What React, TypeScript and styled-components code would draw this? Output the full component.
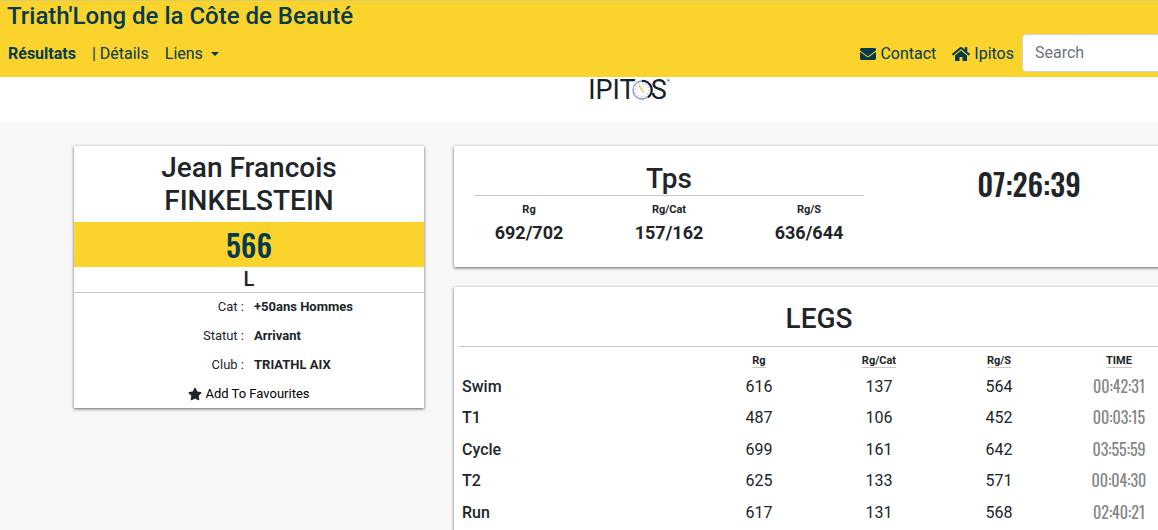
import React from "react";
import styled, { createGlobalStyle } from "styled-components";
import { FaEnvelope, FaHome, FaStar } from "react-icons/fa";

const GlobalStyle = createGlobalStyle`
  *, *::before, *::after { box-sizing: border-box; }
  body {
    margin: 0;
    overflow-x: hidden;
    background: #f7f7f7;
    color: #212529;
    font: 400 16px/24px Roboto, "Liberation Sans", sans-serif;
  }
  h1, h2, p, dl, dd { margin: 0; }
`;

const yellow = "#fad42c";
const navy = "#073b4c";
const rule = "#c8c8c8";
const narrow = `Oswald, "Roboto Condensed", "Liberation Sans Narrow", sans-serif`;

const Page = styled.div`
  min-width: 1258px;
`;

const Header = styled.header`
  background: ${yellow};
  border-top: 1px solid #dccb6a;
  padding: 0 0 5px;
`;

const Brand = styled.a`
  display: block;
  width: max-content;
  padding-left: 7px;
  color: ${navy};
  font-size: 24px;
  font-weight: 500;
  line-height: 30px;
  text-decoration: none;
`;

const Nav = styled.nav`
  display: flex;
  align-items: center;
  padding-top: 3px;
`;

const NavLink = styled.a<{ $strong?: boolean }>`
  display: flex;
  align-items: center;
  gap: 4px;
  padding: 2px 8px 0;
  color: ${navy};
  font-weight: ${(p) => (p.$strong ? 700 : 400)};
  text-decoration: none;
`;

const NavMenu = styled.button`
  display: flex;
  align-items: center;
  gap: 8px;
  padding: 2px 8px 0;
  border: 0;
  background: none;
  color: ${navy};
  font: inherit;

  &::after {
    content: "";
    border: 4px solid transparent;
    border-top-color: currentColor;
    border-bottom: 0;
  }
`;

const NavEnd = styled.div`
  display: flex;
  align-items: center;
  margin-left: auto;
`;

const Search = styled.input`
  width: 236px;
  height: 38px;
  padding: 5px 12px 7px;
  border: 1px solid #ced4da;
  border-radius: 4px;
  background: #fff;
  font: inherit;

  &::placeholder {
    color: #6c757d;
    opacity: 1;
  }
`;

const LogoBand = styled.div`
  display: flex;
  justify-content: center;
  height: 45px;
  background: #fff;
`;

const Logo = styled.a`
  display: flex;
  height: 26px;
  color: #14202e;
  font-size: 27px;
  font-weight: 400;
  line-height: 26px;
  text-decoration: none;

  svg {
    width: 22px;
    height: 22px;
    margin: 2px -2px 0 -5px;
  }
  small {
    font-size: 4px;
    line-height: 8px;
  }
`;

const Container = styled.main`
  display: grid;
  grid-template-columns: 4fr 8fr;
  align-items: start;
  max-width: 1140px;
  margin: 0 auto;
  padding-top: 24px;
`;

const Column = styled.div`
  display: grid;
  gap: 20px;
  padding: 0 15px 20px;
`;

const Card = styled.section`
  background: #fff;
  box-shadow: 0 1px 3px rgba(0, 0, 0, 0.6);
`;

const Name = styled.h1`
  padding: 5px 60px;
  font-size: 28px;
  font-weight: 500;
  line-height: 33px;
  text-align: center;
`;

const Bib = styled.p`
  background: ${yellow};
  color: ${navy};
  font: 500 30px/45px ${narrow};
  text-align: center;
`;

const Race = styled.p`
  border-bottom: 1px solid ${rule};
  font-size: 20px;
  font-weight: 500;
  line-height: 25px;
  text-align: center;
`;

const Facts = styled.dl`
  display: grid;
  grid-template-columns: 1fr 1fr;
  gap: 1px 10px;
  font-size: 13px;
  line-height: 28px;

  dt { text-align: right; }
  dd { font-weight: 700; }
`;

const Favourite = styled.button`
  display: flex;
  align-items: center;
  justify-content: center;
  gap: 3px;
  width: 100%;
  padding: 1px 0 0;
  border: 0;
  background: none;
  color: #000;
  font: 400 13px/28px Roboto, sans-serif;

  svg { color: #212529; }
`;

const Summary = styled(Card)`
  display: grid;
  grid-template-columns: 7fr 5fr;
  padding: 15px 5px 20px;
`;

const Title = styled.h2`
  padding-top: 2px;
  font-size: 28px;
  font-weight: 500;
  line-height: 32px;
  text-align: center;
`;

const SummaryTitle = styled(Title)`
  margin: 0 15px;
  border-bottom: 1px solid ${rule};
`;

const Ranks = styled.dl`
  display: grid;
  grid-template-columns: repeat(3, 1fr);
  padding-top: 5px;
  text-align: center;

  dt {
    font-size: 11px;
    font-weight: 700;
    line-height: 17px;
  }
  dd {
    font-size: 18px;
    font-weight: 700;
    line-height: 29px;
  }
`;

const TotalTime = styled.p`
  font: 500 30px/45px ${narrow};
  text-align: center;
`;

const Legs = styled(Card)`
  padding: 14px 5px 20px;
`;

const LegsTable = styled.table`
  width: 100%;
  margin-top: 11px;
  border-top: 1px solid ${rule};
  border-collapse: collapse;
  table-layout: fixed;
  text-align: center;

  th, td { padding: 0; }
  thead th {
    height: 24px;
    padding-top: 4px;
    font-size: 11px;
    line-height: 13px;
  }
  thead th:first-child { width: 33.33%; }
  thead span {
    display: inline-block;
    border-bottom: 1px solid ${rule};
  }
  tbody th {
    padding-left: 3px;
    font-weight: 500;
    text-align: left;
  }
  tbody tr { height: 32px; }
  tbody tr:nth-child(even) { height: 31px; }
  tbody td:last-child {
    padding-bottom: 2px;
    color: #868686;
    font-family: ${narrow};
  }
`;

const Clock = () => (
  <svg viewBox="0 0 22 22" fill="none" aria-hidden="true">
    <circle cx="11" cy="11" r="9" fill="#fff" stroke="#8496b5" strokeWidth="1.3" />
    <path d="M11 1.8a9.2 9.2 0 0 1 6 16.6" stroke="#14202e" strokeWidth="2.2" />
    <circle cx="11" cy="11" r="6.8" stroke="#8797b8" strokeWidth="1.2" strokeDasharray=".8 2.76" />
    <path d="M8 6.5 11 11l2 2.5" stroke="#eac766" strokeWidth="1.4" />
  </svg>
);

const ranks = [
  ["Rg", "692/702"],
  ["Rg/Cat", "157/162"],
  ["Rg/S", "636/644"],
];

const facts = [
  ["Cat :", "+50ans Hommes"],
  ["Statut :", "Arrivant"],
  ["Club :", "TRIATHL AIX"],
];

const legs = [
  ["Swim", "616", "137", "564", "00:42:31"],
  ["T1", "487", "106", "452", "00:03:15"],
  ["Cycle", "699", "161", "642", "03:55:59"],
  ["T2", "625", "133", "571", "00:04:30"],
  ["Run", "617", "131", "568", "02:40:21"],
];

export default function App() {
  return (
    <Page>
      <GlobalStyle />
      <Header>
        <Brand href="#">Triath'Long de la Côte de Beauté</Brand>
        <Nav>
          <NavLink href="#" $strong>Résultats</NavLink>
          <NavLink href="#">| Détails</NavLink>
          <NavMenu type="button">Liens</NavMenu>
          <NavEnd>
            <NavLink href="#"><FaEnvelope />Contact</NavLink>
            <NavLink href="#"><FaHome size={18} />Ipitos</NavLink>
            <Search type="search" placeholder="Search" aria-label="Search" />
          </NavEnd>
        </Nav>
      </Header>
      <LogoBand>
        <Logo href="#" aria-label="Ipitos">IPIT<Clock />S<small>®</small></Logo>
      </LogoBand>
      <Container>
        <Column>
          <Card>
            <Name>Jean Francois FINKELSTEIN</Name>
            <Bib>566</Bib>
            <Race>L</Race>
            <Facts>
              {facts.map(([label, value]) => (
                <React.Fragment key={label}>
                  <dt>{label}</dt>
                  <dd>{value}</dd>
                </React.Fragment>
              ))}
            </Facts>
            <Favourite type="button"><FaStar size={14} />Add To Favourites</Favourite>
          </Card>
        </Column>
        <Column>
          <Summary>
            <div>
              <SummaryTitle>Tps</SummaryTitle>
              <Ranks>
                {ranks.map(([label, value]) => (
                  <div key={label}>
                    <dt>{label}</dt>
                    <dd>{value}</dd>
                  </div>
                ))}
              </Ranks>
            </div>
            <TotalTime>07:26:39</TotalTime>
          </Summary>
          <Legs>
            <Title>LEGS</Title>
            <LegsTable>
              <thead>
                <tr>
                  <th aria-label="Leg" />
                  {["Rg", "Rg/Cat", "Rg/S", "TIME"].map((h) => (
                    <th key={h} scope="col"><span>{h}</span></th>
                  ))}
                </tr>
              </thead>
              <tbody>
                {legs.map(([leg, ...cells]) => (
                  <tr key={leg}>
                    <th scope="row">{leg}</th>
                    {cells.map((c, i) => <td key={i}>{c}</td>)}
                  </tr>
                ))}
              </tbody>
            </LegsTable>
          </Legs>
        </Column>
      </Container>
    </Page>
  );
}
